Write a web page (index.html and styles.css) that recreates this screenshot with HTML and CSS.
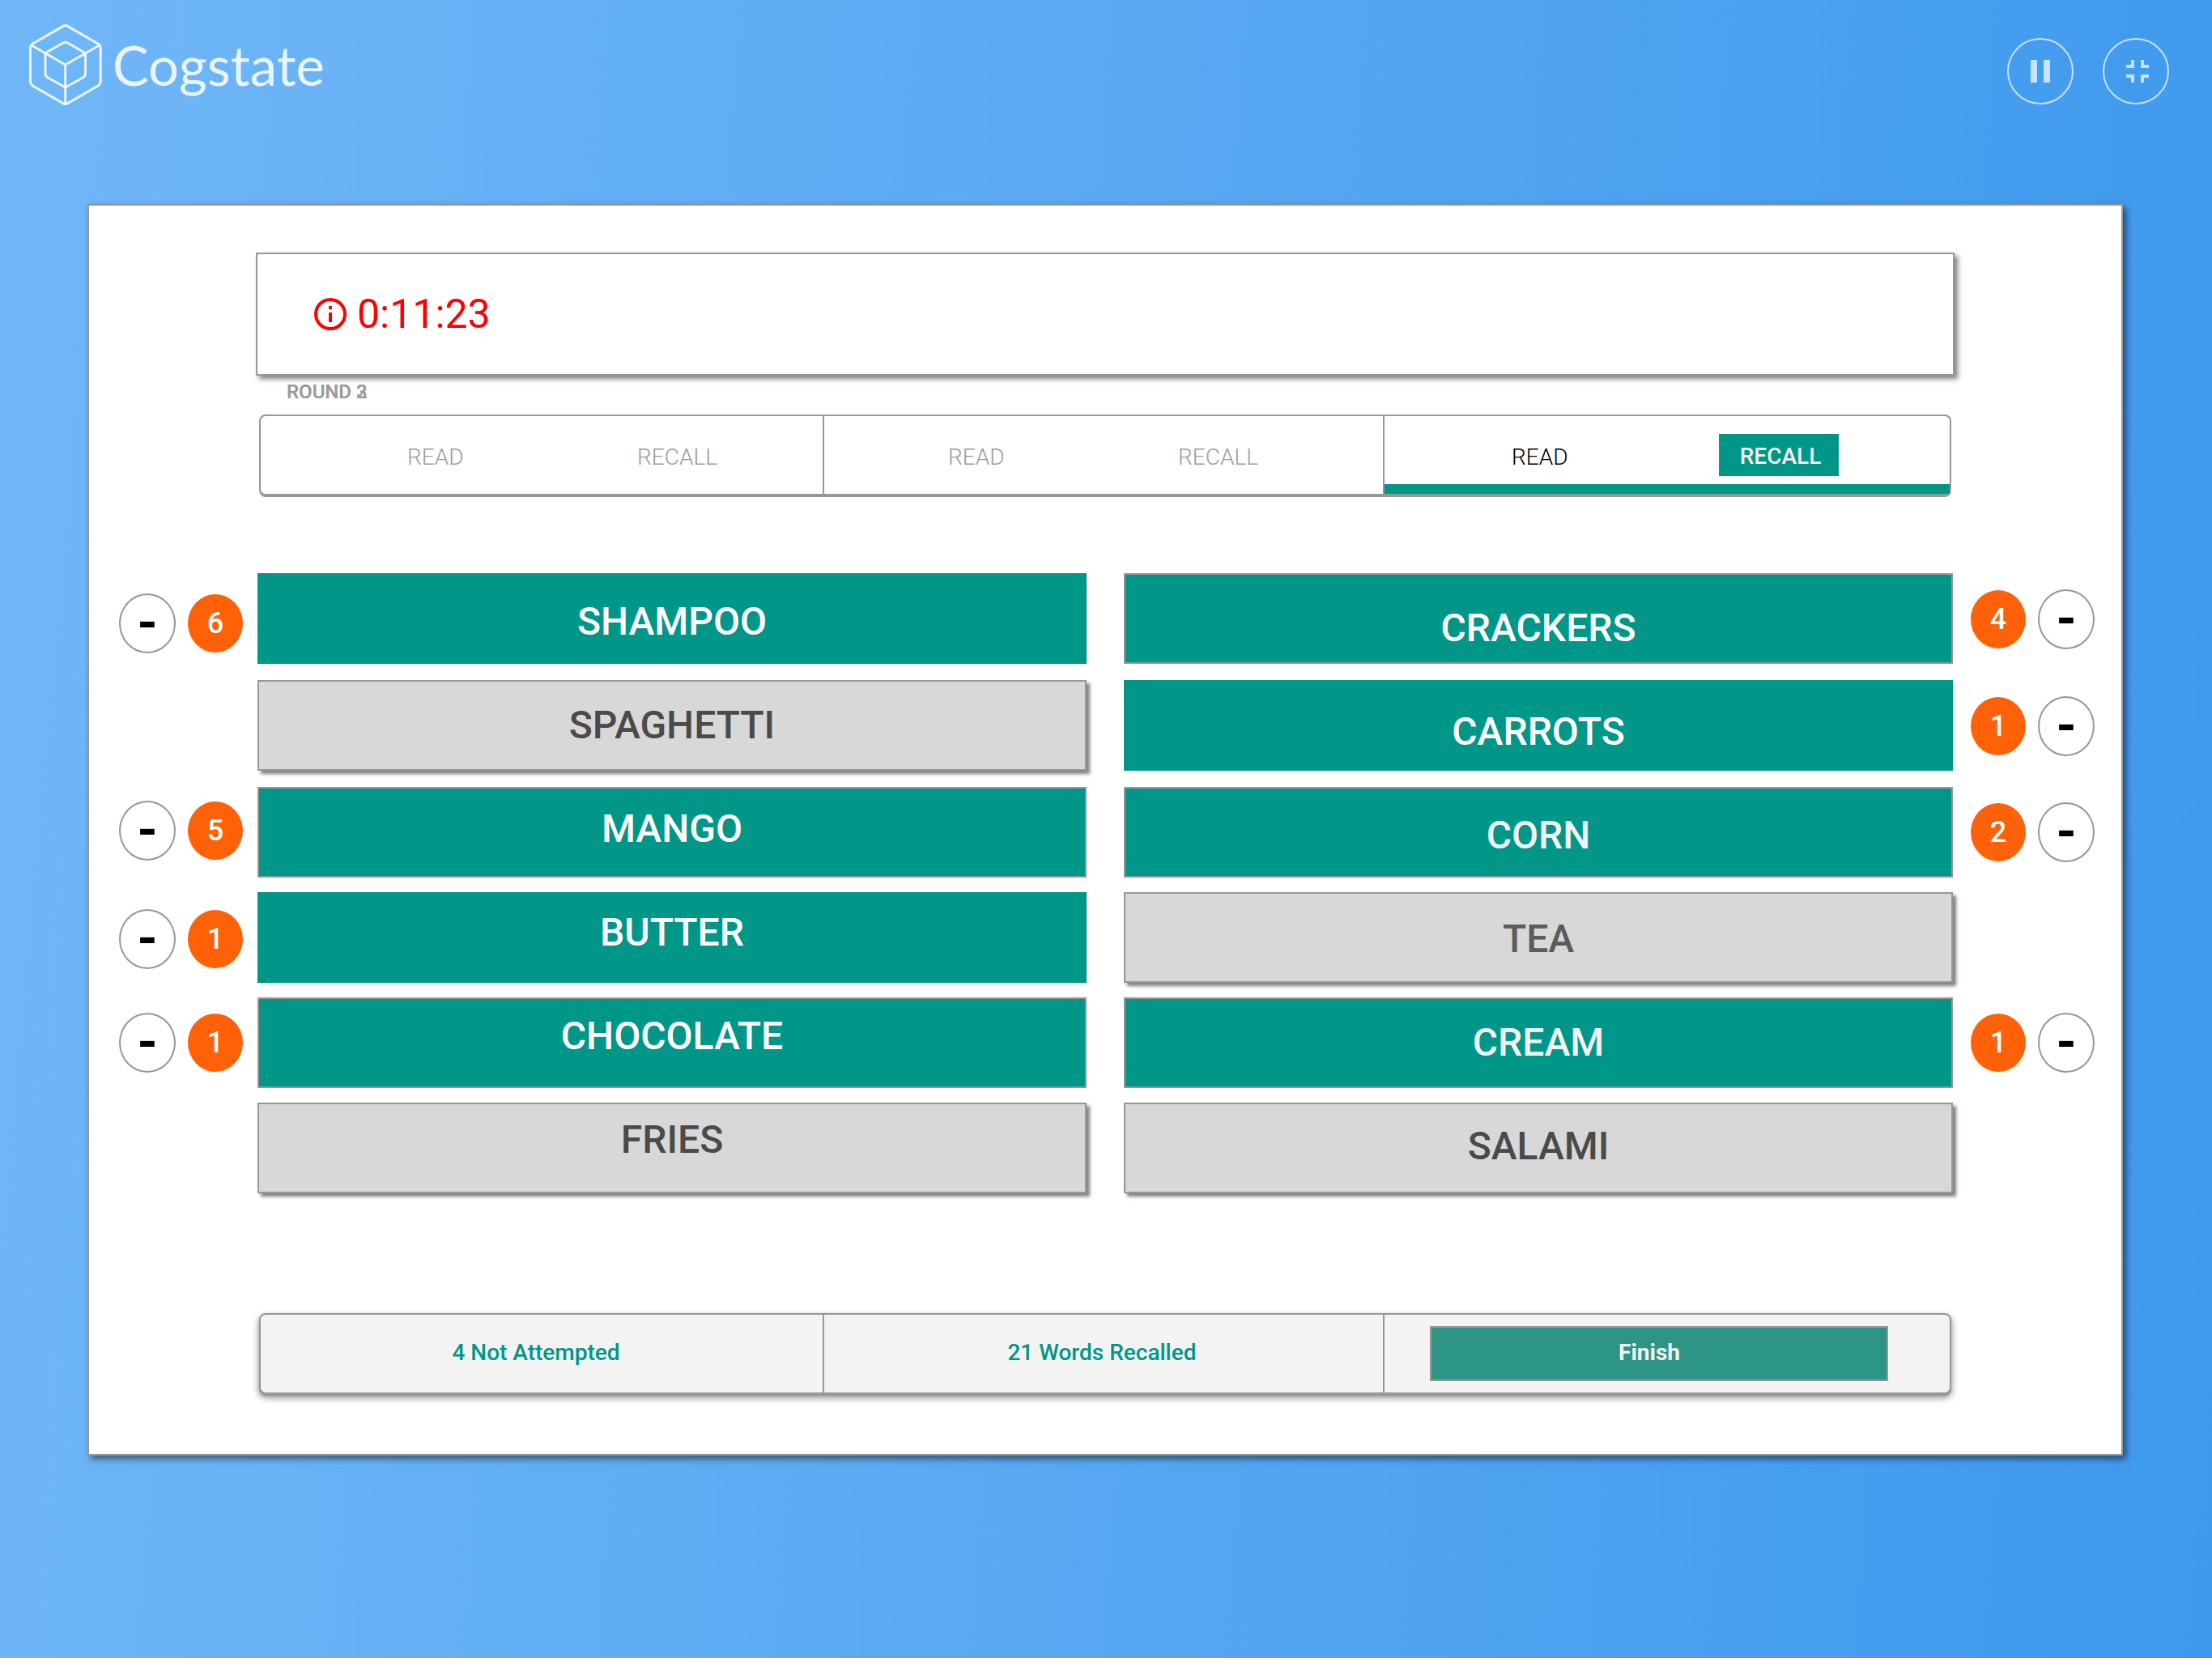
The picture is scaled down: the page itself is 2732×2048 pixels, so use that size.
FILE: index.html
```html
<!DOCTYPE html>
<html lang="en">
<head>
<meta charset="utf-8">
<meta name="viewport" content="width=device-width, initial-scale=1">
<title>Cogstate</title>
<link rel="stylesheet" href="styles.css">
</head>
<body>
<header class="topbar">
  <div class="brand">
    <svg class="brand-mark" viewBox="0 0 90 100" aria-hidden="true">
      <path d="M41.5 2.6Q44.7 .6 48 2.6L85 24Q88.2 26 88.2 29.5V70.5Q88.2 74 85 76L48 97.4Q44.7 99.4 41.5 97.4L4.5 76Q1.5 74 1.5 70.5V29.5Q1.5 26 4.5 24Z"/>
      <path d="M20 35.5L42 23Q44.7 21.4 47.5 23L69.5 35.5V61Q69.5 64 67 65.5L44.7 78L22.5 65.5Q20 64 20 61Z"/>
      <path d="M3 26L44.7 50L86.5 26M44.7 50V98"/>
    </svg>
    <span class="brand-name">Cogstate</span>
  </div>
  <nav class="actions" aria-label="Session">
    <button class="round-button" type="button" aria-label="Pause">
      <svg viewBox="0 0 24 24" aria-hidden="true"><path d="M6 19h4V5H6zM14 5v14h4V5z"/></svg>
    </button>
    <button class="round-button" type="button" aria-label="Exit full screen">
      <svg viewBox="-1 0 24 24" aria-hidden="true"><path d="M5 16h3v3h2v-5H5zM8 8H5v2h5V5H8zM14 19h2v-3h3v-2h-5zM16 8V5h-2v5h5V8z"/></svg>
    </button>
  </nav>
</header>

<main class="card">
  <section class="timer">
    <svg class="timer-icon" viewBox="0 0 24 24" aria-hidden="true"><path d="M11 7h2v2h-2zM11 11h2v6h-2zM12 2a10 10 0 1 0 0 20 10 10 0 0 0 0-20zm0 18a8 8 0 1 1 0-16 8 8 0 0 1 0 16z"/></svg>
    <time>0:11:23</time>
  </section>

  <div class="round-label">
    <span>ROUND 2</span>
    <span>ROUND 3</span>
  </div>

  <section class="bar rounds">
    <div class="cell cell-first"><span class="phase">READ</span><span class="phase phase-recall">RECALL</span></div>
    <div class="cell"><span class="phase">READ</span><span class="phase phase-recall">RECALL</span></div>
    <div class="cell cell-active"><span class="phase">READ</span><span class="phase phase-recall phase-current">RECALL</span></div>
  </section>

  <section class="board">
    <div class="counters counters-left">
      <div class="counter row-1"><button class="minus" type="button" aria-label="Remove one Shampoo">-</button><span class="count">6</span></div>
      <div class="counter row-3"><button class="minus" type="button" aria-label="Remove one Mango">-</button><span class="count">5</span></div>
      <div class="counter row-4"><button class="minus" type="button" aria-label="Remove one Butter">-</button><span class="count">1</span></div>
      <div class="counter row-5"><button class="minus" type="button" aria-label="Remove one Chocolate">-</button><span class="count">1</span></div>
    </div>

    <div class="column">
      <div class="tiles">
        <button class="tile recalled flat" type="button" id="shampoo"></button>
        <button class="tile" type="button" id="spaghetti"></button>
        <button class="tile recalled" type="button" id="mango"></button>
        <button class="tile recalled flat" type="button" id="butter"></button>
        <button class="tile recalled" type="button" id="chocolate"></button>
        <button class="tile" type="button" id="fries"></button>
      </div>
      <div class="words">
        <label class="word on" for="shampoo">SHAMPOO</label>
        <label class="word" for="spaghetti">SPAGHETTI</label>
        <label class="word on" for="mango">MANGO</label>
        <label class="word on" for="butter">BUTTER</label>
        <label class="word on" for="chocolate">CHOCOLATE</label>
        <label class="word" for="fries">FRIES</label>
      </div>
    </div>

    <div class="column">
      <div class="tiles">
        <button class="tile recalled" type="button" id="crackers"></button>
        <button class="tile recalled flat" type="button" id="carrots"></button>
        <button class="tile recalled" type="button" id="corn"></button>
        <button class="tile" type="button" id="tea"></button>
        <button class="tile recalled" type="button" id="cream"></button>
        <button class="tile" type="button" id="salami"></button>
      </div>
      <div class="words words-right">
        <label class="word on" for="crackers">CRACKERS</label>
        <label class="word on" for="carrots">CARROTS</label>
        <label class="word on soft" for="corn">CORN</label>
        <label class="word muted" for="tea">TEA</label>
        <label class="word on soft" for="cream">CREAM</label>
        <label class="word" for="salami">SALAMI</label>
      </div>
    </div>

    <div class="counters counters-right">
      <div class="counter row-1"><span class="count">4</span><button class="minus" type="button" aria-label="Remove one Crackers">-</button></div>
      <div class="counter row-2"><span class="count">1</span><button class="minus" type="button" aria-label="Remove one Carrots">-</button></div>
      <div class="counter row-3"><span class="count">2</span><button class="minus" type="button" aria-label="Remove one Corn">-</button></div>
      <div class="counter row-5"><span class="count">1</span><button class="minus" type="button" aria-label="Remove one Cream">-</button></div>
    </div>
  </section>

  <footer class="bar summary">
    <div class="cell total total-first">4 Not Attempted</div>
    <div class="cell total">21 Words Recalled</div>
    <div class="cell finish-cell"><button class="finish" type="button">Finish</button></div>
  </footer>
</main>
</body>
</html>
```
FILE: styles.css
```css
:root {
  --teal: #009688;
  --line: #979797;
  --orange: #ff6109;
}

* { box-sizing: border-box; }

body {
  margin: 0;
  min-height: 100vh;
  font-family: Roboto, "Liberation Sans", sans-serif;
  font-size: 28px;
  color: #000;
  background: linear-gradient(95deg, #70b7f7 0%, #58a8f2 50%, #3d99ed 100%) no-repeat;
}

button {
  font: inherit;
  padding: 0;
  margin: 0;
  cursor: pointer;
}

/* Header */
.topbar {
  display: flex;
  justify-content: space-between;
  align-items: flex-start;
  min-height: 252px;
  padding: 30px 53px 0 36px;
}

.brand {
  display: flex;
  align-items: center;
  gap: 13px;
}

.brand-mark {
  width: 90px;
  height: 100px;
  fill: none;
  stroke: rgba(255, 255, 255, .85);
  stroke-width: 3;
  stroke-linejoin: round;
}

.brand-name {
  font-family: Lato, "Open Sans", sans-serif;
  font-size: 67px;
  line-height: 100px;
  color: rgba(255, 255, 255, .85);
}

.actions {
  display: flex;
  gap: 36px;
  padding-top: 17px;
}

.round-button {
  display: grid;
  place-items: center;
  width: 82px;
  height: 82px;
  border: 2px solid rgba(255, 255, 255, .7);
  border-radius: 50%;
  background: none;
}

.round-button svg {
  width: 48px;
  height: 48px;
  fill: rgba(255, 255, 255, .7);
}

/* Card */
.card {
  margin: 0 110px 0 108px;
  padding: 58px 0 74px;
  border: 2px solid var(--line);
  background: #fff;
  box-shadow: 4px 4px 8px rgba(0, 0, 0, .5);
}

.timer {
  display: flex;
  align-items: center;
  gap: 9px;
  height: 152px;
  margin: 0 206px;
  padding-left: 66px;
  border: 2px solid var(--line);
  box-shadow: 4px 4px 6px rgba(0, 0, 0, .5);
  color: #f00;
  font-size: 50px;
}

.timer-icon {
  width: 48px;
  height: 48px;
  fill: currentColor;
}

.round-label {
  display: grid;
  margin: 0 244px 8px;
  font-size: 24px;
  line-height: 40px;
  font-weight: 500;
  color: #9b9b9b;
}

.round-label span { grid-area: 1 / 1; }

.bar {
  display: grid;
  grid-template-columns: 694fr 692fr 700fr;
  height: 100px;
  margin: 0 210px;
  border: 2px solid var(--line);
  border-radius: 8px;
  box-shadow: 0 2px 0 var(--line);
}

.cell {
  display: flex;
  align-items: center;
  justify-content: center;
}

.cell + .cell { border-left: 2px solid var(--line); }

.rounds .cell {
  padding-top: 4px;
  font-weight: 300;
  color: #9b9b9b;
}

.rounds .cell-first { padding-left: 52px; }

.phase { width: 68px; }

.phase-recall {
  width: 100px;
  margin-left: 216px;
}

.rounds .cell-active {
  color: #000;
  box-shadow: inset 0 -12px 0 var(--teal);
}

.phase-current {
  padding: 4px 0 0;
  margin: -4px -20px 0 188px;
  width: 148px;
  line-height: 48px;
  padding-left: 4px;
  text-align: center;
  font-weight: 500;
  color: #f3f3f3;
  background: var(--teal);
}

/* Word board */
.board {
  display: flex;
  margin: 96px 0 148px;
}

.column {
  position: relative;
  flex: 1;
}

.column + .column { margin-left: 46px; }

.tiles,
.counters {
  display: grid;
  grid-template-rows: 114px 114px repeat(4, 112px);
  row-gap: 18px;
}

.tile {
  width: 100%;
  height: 112px;
  border: 2px solid var(--line);
  background: #d8d8d8;
  box-shadow: 4px 4px 4px rgba(0, 0, 0, .5);
}

.recalled {
  background: var(--teal);
  box-shadow: none;
}

.flat { border-color: var(--teal); }

.words {
  position: absolute;
  top: -4px;
  left: 0;
  right: 0;
  display: flex;
  flex-direction: column;
  pointer-events: none;
}

.words-right { top: 4px; }

.word {
  font-size: 48px;
  line-height: 128px;
  font-weight: 500;
  text-align: center;
  color: #4a4a4a;
}

.word.on { color: #fff; }
.word.soft { color: #f3f3f3; }
.word.muted { color: #5b5b60; }

.counters { width: 208px; }

.counters-left {
  grid-template-rows: 124px 128px 132px 136px 120px 126px;
  row-gap: 0;
  padding-left: 37px;
}

.counters-right { padding-left: 22px; }

.counter {
  display: flex;
  align-items: center;
  gap: 15px;
}

.row-1 { grid-row: 1; }
.row-2 { grid-row: 2; }
.row-3 { grid-row: 3; }
.row-4 { grid-row: 4; }
.row-5 { grid-row: 5; }

.minus {
  width: 70px;
  height: 74px;
  border: 2px solid var(--line);
  border-radius: 50%;
  background: #fff;
  color: #000;
  font-size: 64px;
  line-height: 60px;
  font-weight: 700;
}

.count {
  width: 68px;
  height: 72px;
  border-radius: 50%;
  background: var(--orange);
  color: #fff;
  font-size: 36px;
  line-height: 72px;
  font-weight: 500;
  text-align: center;
}

/* Summary */
.summary {
  background: #f3f3f3;
  box-shadow: 0 2px 0 var(--line), 0 4px 8px rgba(0, 0, 0, .5);
}

.total {
  padding: 0 4px 4px 0;
  font-weight: 500;
  color: var(--teal);
}

.total-first { padding-right: 14px; }

.finish-cell { padding: 0 76px 0 56px; }

.finish {
  width: 100%;
  height: 68px;
  padding: 0 24px 4px 0;
  border: 2px solid var(--line);
  background: #2c9586;
  color: #f3f3f3;
  font-weight: 700;
}
```
